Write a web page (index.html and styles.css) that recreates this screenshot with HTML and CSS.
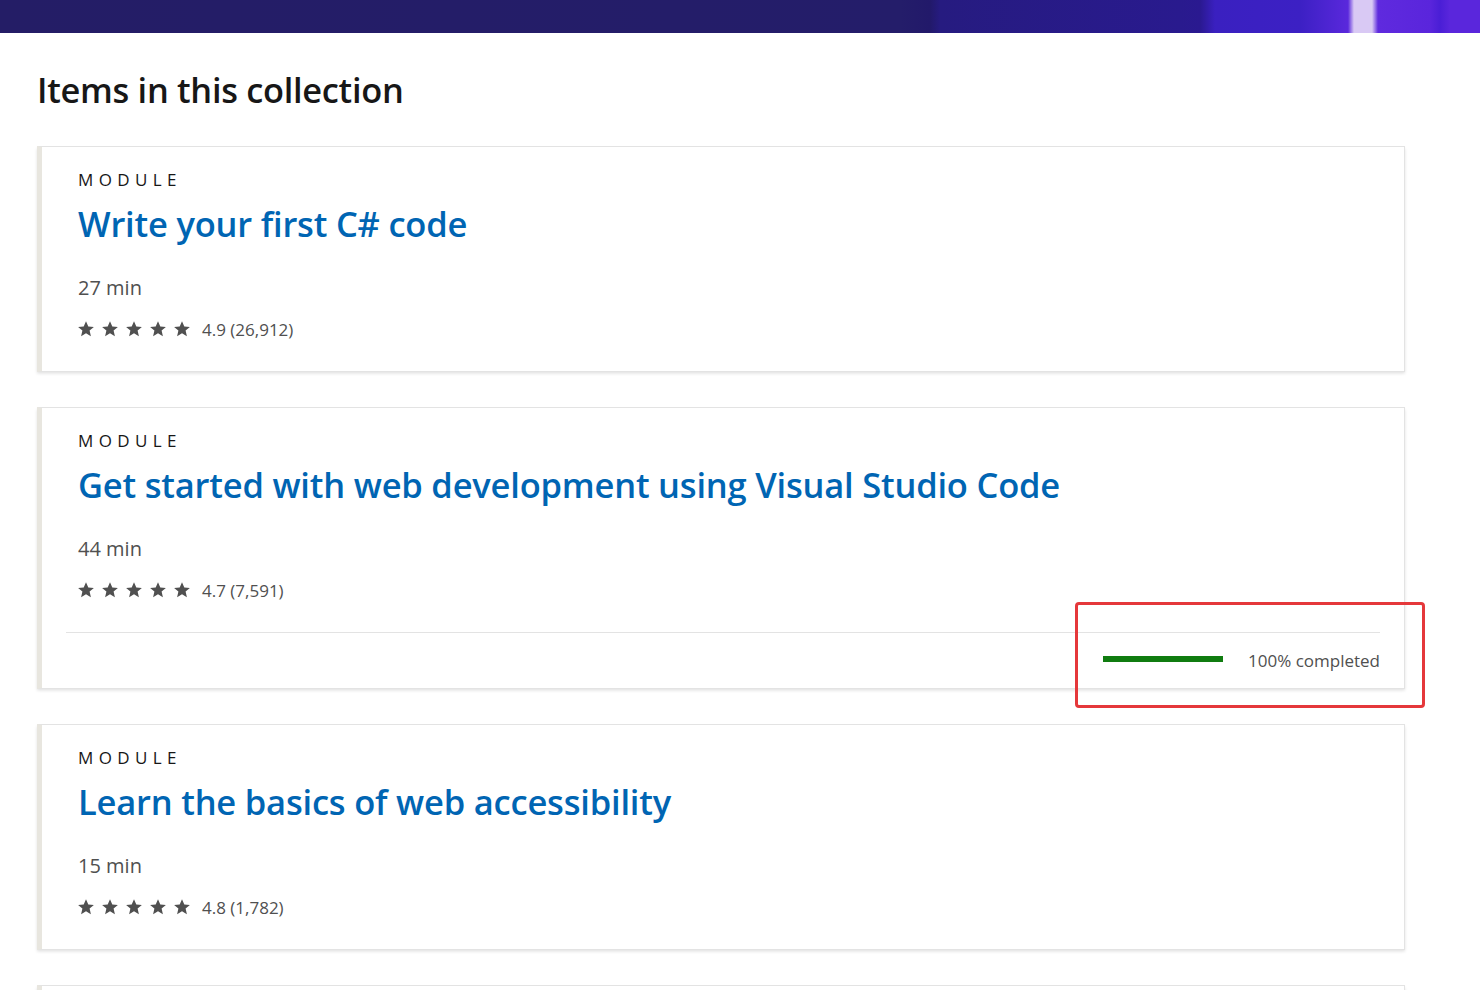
FILE: index.html
```html
<!DOCTYPE html>
<html lang="en">
<head>
<meta charset="utf-8">
<title>Items in this collection</title>
<link rel="stylesheet" href="styles.css">
</head>
<body>
<div class="hero"></div>
<main class="content">
  <h2 class="section-title">Items in this collection</h2>
  <ul class="card-list">
    <li class="card">
      <div class="card-body">
        <p class="card-type">MODULE</p>
        <a class="card-title" href="#">Write your first C# code</a>
        <p class="card-duration">27 min</p>
        <div class="rating">
          <span class="stars">
            <svg viewBox="0 0 16 16"><path d="M8 0.2L10.3 5.4 15.9 5.9 11.6 9.6 12.9 15.2 8 12.3 3.1 15.2 4.4 9.6 0.1 5.9 5.7 5.4Z"/></svg>
            <svg viewBox="0 0 16 16"><path d="M8 0.2L10.3 5.4 15.9 5.9 11.6 9.6 12.9 15.2 8 12.3 3.1 15.2 4.4 9.6 0.1 5.9 5.7 5.4Z"/></svg>
            <svg viewBox="0 0 16 16"><path d="M8 0.2L10.3 5.4 15.9 5.9 11.6 9.6 12.9 15.2 8 12.3 3.1 15.2 4.4 9.6 0.1 5.9 5.7 5.4Z"/></svg>
            <svg viewBox="0 0 16 16"><path d="M8 0.2L10.3 5.4 15.9 5.9 11.6 9.6 12.9 15.2 8 12.3 3.1 15.2 4.4 9.6 0.1 5.9 5.7 5.4Z"/></svg>
            <svg viewBox="0 0 16 16"><path d="M8 0.2L10.3 5.4 15.9 5.9 11.6 9.6 12.9 15.2 8 12.3 3.1 15.2 4.4 9.6 0.1 5.9 5.7 5.4Z"/></svg>
          </span>
          <span class="rating-text">4.9 (26,912)</span>
        </div>
      </div>
    </li>
    <li class="card">
      <div class="card-body">
        <p class="card-type">MODULE</p>
        <a class="card-title" href="#">Get started with web development using Visual Studio Code</a>
        <p class="card-duration">44 min</p>
        <div class="rating">
          <span class="stars">
            <svg viewBox="0 0 16 16"><path d="M8 0.2L10.3 5.4 15.9 5.9 11.6 9.6 12.9 15.2 8 12.3 3.1 15.2 4.4 9.6 0.1 5.9 5.7 5.4Z"/></svg>
            <svg viewBox="0 0 16 16"><path d="M8 0.2L10.3 5.4 15.9 5.9 11.6 9.6 12.9 15.2 8 12.3 3.1 15.2 4.4 9.6 0.1 5.9 5.7 5.4Z"/></svg>
            <svg viewBox="0 0 16 16"><path d="M8 0.2L10.3 5.4 15.9 5.9 11.6 9.6 12.9 15.2 8 12.3 3.1 15.2 4.4 9.6 0.1 5.9 5.7 5.4Z"/></svg>
            <svg viewBox="0 0 16 16"><path d="M8 0.2L10.3 5.4 15.9 5.9 11.6 9.6 12.9 15.2 8 12.3 3.1 15.2 4.4 9.6 0.1 5.9 5.7 5.4Z"/></svg>
            <svg viewBox="0 0 16 16"><path d="M8 0.2L10.3 5.4 15.9 5.9 11.6 9.6 12.9 15.2 8 12.3 3.1 15.2 4.4 9.6 0.1 5.9 5.7 5.4Z"/></svg>
          </span>
          <span class="rating-text">4.7 (7,591)</span>
        </div>
      </div>
      <div class="card-footer">
        <div class="progress">
          <span class="progress-bar"><span class="progress-fill" style="width:100%"></span></span>
          <span class="progress-text">100% completed</span>
        </div>
      </div>
      <span class="highlight"></span>
    </li>
    <li class="card">
      <div class="card-body">
        <p class="card-type">MODULE</p>
        <a class="card-title" href="#">Learn the basics of web accessibility</a>
        <p class="card-duration">15 min</p>
        <div class="rating">
          <span class="stars">
            <svg viewBox="0 0 16 16"><path d="M8 0.2L10.3 5.4 15.9 5.9 11.6 9.6 12.9 15.2 8 12.3 3.1 15.2 4.4 9.6 0.1 5.9 5.7 5.4Z"/></svg>
            <svg viewBox="0 0 16 16"><path d="M8 0.2L10.3 5.4 15.9 5.9 11.6 9.6 12.9 15.2 8 12.3 3.1 15.2 4.4 9.6 0.1 5.9 5.7 5.4Z"/></svg>
            <svg viewBox="0 0 16 16"><path d="M8 0.2L10.3 5.4 15.9 5.9 11.6 9.6 12.9 15.2 8 12.3 3.1 15.2 4.4 9.6 0.1 5.9 5.7 5.4Z"/></svg>
            <svg viewBox="0 0 16 16"><path d="M8 0.2L10.3 5.4 15.9 5.9 11.6 9.6 12.9 15.2 8 12.3 3.1 15.2 4.4 9.6 0.1 5.9 5.7 5.4Z"/></svg>
            <svg viewBox="0 0 16 16"><path d="M8 0.2L10.3 5.4 15.9 5.9 11.6 9.6 12.9 15.2 8 12.3 3.1 15.2 4.4 9.6 0.1 5.9 5.7 5.4Z"/></svg>
          </span>
          <span class="rating-text">4.8 (1,782)</span>
        </div>
      </div>
    </li>
    <li class="card card-empty"></li>
  </ul>
</main>
</body>
</html>
```

FILE: styles.css
```css
* { box-sizing: border-box; }

html, body {
  margin: 0;
  padding: 0;
  background: #ffffff;
  font-family: "Open Sans", "Noto Sans", "Liberation Sans", sans-serif;
  color: #171717;
  overflow: hidden;
}

.hero {
  height: 33px;
  background: linear-gradient(90deg,
    #241d66 0px,
    #241d6a 900px,
    #22196a 930px,
    #261b80 940px,
    #291a8e 1180px,
    #2a1990 1200px,
    #3a20c0 1215px,
    #3c20c4 1300px,
    #5a28dc 1348px,
    #d9c9f4 1354px,
    #d9c9f4 1372px,
    #5f2ade 1378px,
    #5a25dc 1430px,
    #4a1ed6 1440px,
    #5a26dc 1450px,
    #5a26dc 1480px);
}

.content {
  padding: 0 75px 0 37px;
}

.section-title {
  margin: 0;
  padding-top: 35px;
  font-size: 34.4px;
  line-height: 44px;
  font-weight: 600;
  color: #171717;
  letter-spacing: -0.3px;
}

.card-list {
  list-style: none;
  margin: 34px 0 0 0;
  padding: 0;
  display: flex;
  flex-direction: column;
  gap: 35px;
}

.card {
  position: relative;
  background: #fff;
  border: 1px solid #e3e3e3;
  border-left: 5px solid #e8e6df;
  box-shadow: 0 1.5px 3px rgba(0, 0, 0, 0.12);
}

.card-empty {
  min-height: 120px;
}

.card-body {
  padding: 22px 36px 32px 36px;
}

.card-type {
  margin: 0;
  font-size: 17px;
  line-height: 22px;
  letter-spacing: 5.4px;
  color: #171717;
}

.card-title {
  display: block;
  margin-top: 11px;
  font-size: 34.5px;
  line-height: 44px;
  font-weight: 600;
  color: #0065b3;
  text-decoration: none;
  letter-spacing: -0.2px;
}

.card-duration {
  margin: 30px 0 0 0;
  font-size: 20px;
  line-height: 24px;
  color: #505050;
}

.rating {
  display: flex;
  align-items: center;
  margin-top: 19px;
  height: 20px;
}

.stars {
  display: flex;
  gap: 8px;
}

.stars svg {
  width: 16px;
  height: 16px;
  fill: #505050;
  display: block;
}

.rating-text {
  margin-left: 12px;
  font-size: 17px;
  color: #505050;
}

.card-footer {
  margin: 0 24px;
  border-top: 1px solid #e3e3e3;
  height: 56px;
  display: flex;
  align-items: center;
  justify-content: flex-end;
}

.progress {
  display: flex;
  align-items: center;
  gap: 25px;
}

.progress-bar {
  display: block;
  width: 120px;
  height: 6px;
  margin-top: -3px;
  background: #e3e3e3;
}

.progress-fill {
  display: block;
  height: 100%;
  background: #107c10;
}

.progress-text {
  font-size: 17px;
  color: #505050;
}

.highlight {
  position: absolute;
  right: -21px;
  bottom: -20px;
  width: 350px;
  height: 106px;
  border: 3px solid #e5383b;
  border-radius: 4px;
  pointer-events: none;
}
```
